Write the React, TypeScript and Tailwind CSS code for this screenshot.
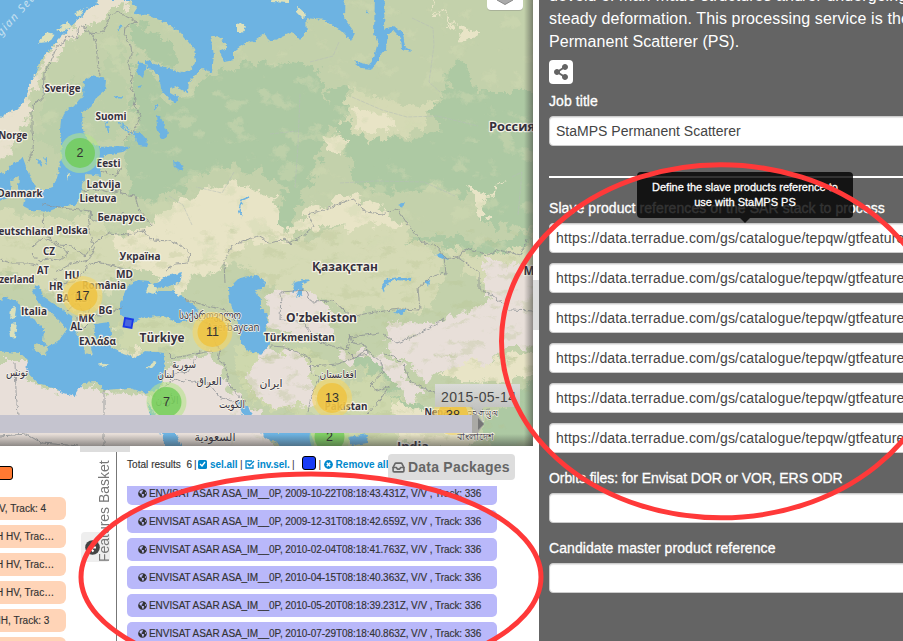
import React from "react";
import { FaGlobeAmericas, FaShareAlt } from "react-icons/fa";
import { FiInbox } from "react-icons/fi";

const WATER = "#6db3e2";
const products = [
  "2009-10-22T08:18:43.431Z",
  "2009-12-31T08:18:42.659Z",
  "2010-02-04T08:18:41.763Z",
  "2010-04-15T08:18:40.363Z",
  "2010-05-20T08:18:39.231Z",
  "2010-07-29T08:18:40.863Z",
];
const basket = ["V, Track: 4", "H HV, Trac…", "H HV, Trac…", "H HV, Trac…", "IH, Track: 3", ""];

type Label = [string, number, number, number, number, boolean?];
// text, centre x, baseline y, width, size, light weight
const labels: Label[] = [
  ["Sverige", 62.5, 92, 36, 10.5],
  ["Suomi", 111, 120, 31, 10.5],
  ["Norge", 13, 139, 29, 10.5],
  ["Eesti", 108.5, 167, 24, 10.5],
  ["Latvija", 103.5, 188, 34, 10.5],
  ["Lietuva", 98, 202, 37, 10.5],
  ["Danmark", 20, 197, 45, 10.5],
  ["Беларусь", 121.5, 221, 48, 10.5],
  ["Россия", 512, 131, 46, 13],
  ["eutschland", 26, 235, 55, 10.5],
  ["Polska", 72, 234, 32, 10.5],
  ["CZ", 49, 255, 12, 10.5],
  ["Україна", 140, 259.5, 41, 10.5],
  ["AT", 43, 274, 12, 10.5],
  ["HU", 72, 279, 15, 10.5],
  ["MD", 124.5, 277.5, 17, 10.5],
  ["zerland", 17, 283, 35, 10.5],
  ["HR", 56, 290, 14, 10.5],
  ["România", 104, 289, 44, 10.5],
  ["BA", 63, 302, 13, 10.5],
  ["RS", 81, 302, 13, 10.5],
  ["Italia", 34, 315, 26, 10.5],
  ["BG", 105.5, 313.5, 14, 10.5],
  ["MK", 86.5, 322, 16, 10.5],
  ["AL", 76.5, 330, 12, 10.5],
  ["Ελλάδα", 97.5, 345, 37, 10.5],
  ["Türkiye", 162, 342, 45, 13],
  ["Қазақстан", 345, 271, 66, 13],
  ["O'zbekiston", 321.5, 322, 71, 13],
  ["Türkmenistan", 299.5, 341, 71, 10.5],
  ["Pakistan", 346, 410, 43, 10.5],
  ["Nepal", 438, 416, 27, 10.5],
  ["India", 413, 451, 32, 13],
  ["М", 529, 275, 11, 13],
  ["საქართველო", 210, 319, 62, 10, true],
  ["Azerbaycan", 233, 331, 53, 10.5, true],
  ["تونس", 17, 376, 22, 11, true],
  ["سورية", 184, 368, 24, 11, true],
  ["لبنان", 166, 378, 17, 11, true],
  ["العراق", 209, 385, 25, 11, true],
  ["الأردن", 167, 404, 23, 11, true],
  ["الكويت", 232, 408, 26, 11, true],
  ["ایران", 271, 387, 23, 11, true],
  ["افغانستان", 338, 378, 37, 11, true],
  ["السعودية", 215, 441, 41, 12, true],
  ["বাংলাদেশ", 475, 440, 37, 10, true],
  ["འབྲུག་ཡུལ", 482, 417, 30, 9, true],
];

const lines = [
  "M82 26 86 31 94 36 96 43 97 56 98 68 100 76",
  "M28 162 32 154 34 142 32 132 32 112 35 102 43 99 44 73 51 61 57 46 64 43 66 36 78 38 77 28 84 25 90 33 98 34 104 31 108 22 109 15 119 12 127 17 132 19 137 22 133 23 126 27 125 36 131 46 132 54 128 62 132 78 131 88 136 99 134 105 141 116 135 128 122 143",
  "M120 160 121 168 116 176 101 171M82 191 98 189 111 193 121 190 122 194 135 196 139 210 152 225M42 204 70 209 91 211 92 221 109 220 124 213",
  "M43 214 44 231 50 239M48 238 60 245 72 246 85 256 93 245 88 228 91 211",
  "M33 246 43 237 57 245 69 253 60 260 49 259 38 261 32 254M0 260 12 263 28 263 44 267M95 246 89 260 71 264 56 272M93 244 109 233 127 235 143 231 153 240 170 241 180 245 190 253 188 263 176 264 166 270",
  "M88 265 97 262 114 266 124 269 133 281M55 278 58 285 77 281 88 266M57 286 66 296 83 291 91 302 88 314 98 316 122 308M67 311 77 302 88 317M76 316 81 331 88 324",
  "M184 299 207 306 226 310 235 321M193 318 208 324 213 339 220 350 218 360 225 365M168 353 173 358 195 354 212 351M168 375 188 372 200 351M184 380 209 383 219 397 239 403",
  "M15 363 16 391 18 415M104 389 104 446M0 436 26 434 42 443 79 446M160 390 175 379 184 382",
  "M225 283 224 263 230 248 243 241 258 236 270 243 286 239 290 244 301 237 314 226 308 214 323 210 352 199 362 207 365 212 383 214 397 208 408 225 422 242 435 246 447 259 460 256 466 248 488 255 498 250 521 255 527 239M280 320 281 292 306 290 311 302 334 301 352 317 368 313 400 309 420 310 418 288 433 276 446 273 444 257M280 320 302 321 319 342 347 350 350 337 380 333",
  "M350 335 353 343 366 345 367 354 354 357 345 348M383 334 397 343 414 336 433 326 445 318M457 257 479 272 479 289 493 296 511 310 533 311",
  "M225 363 229 385 245 402M270 346 285 347 310 358 311 374 320 377 311 397 308 412M310 366 338 364 354 358 366 350 381 362 384 372 370 385 377 391 389 386 380 400 367 414",
  "M384 354 394 356 405 367 410 381 429 391 453 399 478 410 491 409",
];

function Marker({ x, y, n, yellow }: { x: number; y: number; n: string; yellow?: boolean }) {
  return (
    <g>
      <circle cx={x} cy={y} r="20" fill={yellow ? "#f5d566" : "#b5e28c"} fillOpacity=".6" />
      <circle cx={x} cy={y} r="15" fill={yellow ? "#f0c23c" : "#6ecc54"} fillOpacity=".78" />
      <text x={x} y={y + 4} textAnchor="middle" fontSize="12.5" className="fill-[#333] font-['Liberation_Sans',sans-serif]">{n}</text>
    </g>
  );
}

function MapView() {
  return (
    <svg width="533" height="446" viewBox="0 0 533 446" className="block">
      <defs>
        <clipPath id="land">
          <path d="M0 118 8 113 20 107 27 96 30 83 36 75 41 60 51 48 61 37 69 30 77 20 84 15 88 7 94 7 100 0H130L137 8 133 14 148 15 168 24 181 33 194 49 196 61 190 70 181 73 166 67 154 64 145 59 152 69 159 76 161 90 169 99 176 103 179 97 170 92 170 88 175 86 188 94 189 81 202 68 212 73 214 55 210 36 222 38 227 48 219 52 224 62 234 60 234 51 246 43 255 41 265 33 270 42 284 36 293 32 300 40 307 32 306 18 325 20 342 31 351 41 355 33 344 18 345 -8H545V455H-8V118Z" />
        </clipPath>
        <filter id="rough" colorInterpolationFilters="sRGB" x="-10%" y="-10%" width="120%" height="120%">
          <feTurbulence type="fractalNoise" baseFrequency=".075" numOctaves="4" seed="7" />
          <feDisplacementMap in="SourceGraphic" scale="22" xChannelSelector="R" yChannelSelector="G" />
        </filter>
        <filter id="coast" colorInterpolationFilters="sRGB" x="-5%" y="-5%" width="110%" height="110%">
          <feTurbulence type="fractalNoise" baseFrequency=".25" numOctaves="3" seed="3" />
          <feDisplacementMap in="SourceGraphic" scale="4.5" xChannelSelector="R" yChannelSelector="G" />
        </filter>
        <filter id="patches" colorInterpolationFilters="sRGB" x="0" y="0" width="100%" height="100%">
          <feTurbulence type="fractalNoise" baseFrequency=".04 .055" numOctaves="5" seed="12" />
          <feColorMatrix values="0 0 0 0 .82 0 0 0 0 .85 0 0 0 0 .70 8 0 0 0 -4.7" />
        </filter>
        <filter id="relief" colorInterpolationFilters="sRGB" x="0" y="0" width="100%" height="100%">
          <feTurbulence type="fractalNoise" baseFrequency=".05 .1" numOctaves="5" seed="24" />
          <feColorMatrix values="0 0 0 0 .72 0 0 0 0 .77 0 0 0 0 .58 0 7 0 0 -4" />
        </filter>
        <linearGradient id="sideShade"><stop stopColor="#333" stopOpacity="0" /><stop offset="1" stopColor="#333" stopOpacity=".5" /></linearGradient>
        <linearGradient id="baseShade" x2="0" y2="1"><stop stopColor="#333" stopOpacity="0" /><stop offset="1" stopColor="#333" stopOpacity=".5" /></linearGradient>
        <linearGradient id="flag" x2="0" y2="1"><stop stopColor="#dcdcdc" /><stop offset="1" stopColor="#bcbcbc" /></linearGradient>
      </defs>
      <rect width="533" height="446" fill={WATER} />
      <g filter="url(#coast)">
        <g clipPath="url(#land)">
          <rect x="-8" y="-8" width="556" height="466" fill="#c3d1ab" />
          <g filter="url(#rough)">
            <path fill="#e8e1ce" d="M-10 112 20 100 38 70 60 38 88 5 105-5 133-4 122 10 96 20 80 33 65 42 55 54 45 70 35 90 25 125 5 158-10 160Z" />
            <path fill="#adc9a3" d="M128 20 145 24 168 42 186 62 170 68 148 55 134 50ZM132 65 153 70 167 102 188 98 210 75 240 66 280 60 318 67 330 110 322 158 303 195 288 240 275 222 285 185 255 174 222 164 195 175 180 195 145 200 128 184 124 160 135 125ZM330 88 355 90 360 120 375 135 410 138 440 130 430 113 450 92 448 72 466 60 475 92 550 92 550 225 485 226 472 200 440 186 420 190 388 192 355 184 345 145 325 124Z" />
            <path fill="#adc9a3" opacity=".3" d="M44 90 82 80 105 110 90 88 120 30 125 90 135 115 110 142 88 140 60 150 40 140Z" />
            <path fill="#e8e4c6" d="M170 205 200 192 222 184 242 186 260 192 276 194 282 238 298 220 309 206 348 194 385 209 405 228 365 229 320 226 275 247 235 262 195 275 180 295 150 274 130 272 110 260 112 235 145 230 157 216Z" />
            <path fill="#e8e4c6" d="M352 110 372 112 400 116 397 132 370 134 357 126ZM322 137 346 139 344 156 328 150ZM470 185 484 197 505 182 487 202 485 222 472 206ZM430 1 455 26 482 30 462 42 451 24 437 11Z" />
            <path fill="#d5dab5" d="M-10 208 40 218 90 218 115 235 125 260 110 285 100 310 75 310 45 290 10 275-10 270ZM225 260 240 245 270 240 305 243 330 230 380 224 405 227 425 247 445 262 440 283 425 310 370 309 354 319 335 304 308 295 278 292 260 276ZM440 248 550 246V325L495 301 479 280ZM350 88 400 105 440 100 420 130 370 140 345 125Z" />
            <path fill="#e8e4c6" d="M352 112 372 112 396 117 392 130 370 134 357 126Z" />
            <path fill="#ced8ad" d="M120 322 155 316 200 316 211 341 192 352 160 349 123 350ZM230 342 260 350 310 351 340 371 338 395 370 370 384 392 405 396 405 460H350L330 415 290 413 255 403 238 382Z" />
            <path fill="#e8dfd9" d="M-15 362 28 362 30 383 64 392 78 384 105 390 150 392 160 387 170 362 205 352 218 364 229 390 260 412 280 465H-15ZM269 291 306 289 330 312 334 334 300 337 270 324ZM244 377 268 346 310 362 315 400 293 410 260 400ZM389 321 432 327 470 310 495 299 550 311V344L505 349 488 363 446 367 425 383 406 362 388 349ZM483 263 550 267V311L504 309 484 294ZM340 350 363 349 369 353 397 359 407 379 425 389 416 405 380 371 356 363 339 360Z" />
            <path fill="#e8e4c6" d="M448 366 490 361 550 348V374L500 383 460 382 440 374ZM90 355 140 350 154 354 130 360 110 357ZM395 400 415 402 450 420 480 436 470 446H400Z" />
            <path fill="#adc9a3" d="M386 392 412 402 439 413 482 418 504 410 524 386 550 383 550 465H500L480 422 440 421 412 409ZM405 240 443 231 470 244 510 240 535 225 525 249 480 257 451 249 435 244ZM353 355 369 359 403 392 394 388 371 374 354 366Z" />
          </g>
          <rect width="540" height="260" filter="url(#patches)" opacity=".45" />
          <rect y="230" width="540" height="130" filter="url(#relief)" opacity=".3" />
          <rect x="230" y="355" width="310" height="95" filter="url(#relief)" opacity=".35" />
        </g>
        <g fill={WATER}>
          <path d="M-5 174 5 173 14 163 23 158 28 172 36 190 50 190 57 178 61 160 62 144 60 132 61 119 68 109 76 104 83 95 84 81 91 76 106 79 105 91 96 98 91 107 82 112 83 129 89 143 99 147 118 146 131 147 123 152 104 155 100 162 101 176 87 174 82 184 81 195 76 205 62 206 47 212 39 211 31 210 23 206 25 196 17 199 19 177 10 181 12 197-5 202Z" />
          <path d="M132 131 140 132 148 141 147 147 138 146ZM156 115 161 118 168 132 166 139 160 137 157 126ZM174 161 184 165 181 171 175 167ZM145 59 151 62 153 69 147 68ZM139 62 146 65 143 78 137 73Z" />
          <path d="M375-5H385L384 29 394 26 403 33 405 47 412 51 401 49 400 37 394 31 388 34 386 49 379 58 372 70 362 69 353 61 369 65 374 57 378 42 374 34ZM365 11 368 12 365 14Z" />
          <path d="M-5 303 6 297 18 302 23 313 36 321 44 329 43 342 48 346 33 344 34 350 46 356 47 347 58 342 67 329 60 321 50 312 39 303 32 289 39 285 43 296 57 306 72 316 75 330 83 342 85 353 93 356 90 343 99 344 94 334 95 324 109 322 111 333 111 348 124 354 136 358 145 351 165 353 164 370 159 389 145 393 129 388 105 390 96 382 83 383 75 396 64 393 53 388 38 384 26 371 28 360 20 353-5 351Z" />
          <path d="M120 315 120 304 128 286 139 280 150 281 155 291 172 291 196 306 198 317 178 323 162 316 144 317 135 322ZM154 284 167 276 183 272 180 282 164 288 152 287Z" />
          <path d="M229 288 239 278 255 275 266 281 262 289 255 290 261 300 261 308 268 314 267 326 265 334 270 344 261 354 248 351 241 343 241 330 235 315 230 302ZM292 283 307 279 309 281 302 283 303 294 296 298 299 289 292 293 295 284ZM381 286 387 279 398 277 410 278 411 281 395 280 385 285 384 293ZM394 313 402 309 407 310 402 314ZM435 255 441 253 449 260 442 258ZM425 280 430 281 428 287ZM398 205 405 202 403 207Z" />
          <path d="M238 399 248 406 255 424 275 432 310 432 317 450H290L270 440 250 426 242 414ZM162 432 175 432 183 450H165ZM147 401 157 417 161 435 151 418ZM349 437 368 434 367 443 351 446Z" />
        </g>
        <g fill="#dce1bc">
          <path d="M237 25 241 22 246 28 242 33 237 33ZM270-2H288L288 3 272 2ZM296 6 305 14 304 19 297 12ZM80 317 90 321 85 328 78 322ZM66 174 70 173 68 181ZM11 309 16 307 15 317 10 319ZM10 324 17 323 15 337 11 338ZM98 363 110 365 102 367ZM146 368 154 362 157 363 151 369ZM149 283 157 288 155 294 146 292Z" />
          <path d="M119 353 126 350 127 354ZM112 339 116 341 112 343ZM112 327 117 329 112 331ZM92 334 104 343 96 337ZM38 43 47 32 55 34 50 42ZM57 30 68 22 72 27 62 32ZM74 14 84 8 80 16Z" />
        </g>
        <path d="M105 117 109 133M126 112 122 127 132 134M118 122 130 129M114 97 122 98M37 158 42 167M46 164 45 157M118 30 122 25M138 87 142 86M158 105 154 110M249 197 242 200 239 210 242 217" stroke={WATER} strokeWidth="1.4" fill="none" />
      </g>
      <g fill="none" stroke="#8d9296" strokeWidth=".8" filter="url(#coast)">
        {lines.map((d) => <path key={d} d={d} />)}
      </g>
      <path fill="none" stroke="#b5bdb8" strokeWidth=".55" strokeDasharray="4 1" d="M310 62 333 56 339 42M412 18 433 28 434 45 429 82 440 92M300 94 298 145 295 188M270 134 297 131M352 97 382 110 407 117 437 116 478 126M340 183 376 181 424 182 455 196M234 172 222 193 196 187M169 196 183 205 192 225M512 177 522 172 518 215" />
      <text x="-5" y="38" transform="rotate(-48 0 38)" className="fill-[#c8e1f0] italic font-['Noto_Sans',sans-serif]" fontSize="11" letterSpacing="1.4">egian Sea</text>
      <g className="font-['Open_Sans','DejaVu_Sans',sans-serif] fill-[#35303d] stroke-[#f5f3e8] [paint-order:stroke]">
        {labels.map(([text, x, y, w, size, light]) => (
          <text key={text} x={x} y={y} fontSize={size} fontWeight={light ? 400 : 700} strokeWidth={light ? 1.5 : 2.4} strokeLinejoin="round" textAnchor="middle" textLength={w} lengthAdjust="spacingAndGlyphs">{text}</text>
        ))}
      </g>
      <path d="M125 318 133 319.5 131.500 328 123.500 326.500Z" fill="#4966de" stroke="#1938e8" strokeWidth="1.8" />
      <Marker x={80} y={153} n="2" />
      <Marker x={82.5} y={296} n="17" yellow />
      <Marker x={212.5} y={332} n="11" yellow />
      <Marker x={166.5} y={402} n="7" />
      <Marker x={332} y={398} n="13" yellow />
      <Marker x={453} y={415} n="38" yellow />
      <Marker x={329.5} y={437} n="2" />
      <rect y="415" width="472" height="18" fill="#c5c4cf" />
      <path d="M472 415H478L484 424 478 433H472Z" fill="#aaa9a5" /><path d="M478 418 484 424 478 430Z" fill="#777" />
      <path d="M435 384H520V407H484L478 414 472 407H435Z" fill="url(#flag)" fillOpacity=".92" />
      <text x="441" y="402" fontSize="14" textLength="75" className="fill-[#444] font-['Liberation_Sans',sans-serif]">2015-05-14</text>
      <rect x="487" y="-6" width="36" height="17" rx="4" fill="#777" fillOpacity=".35" />
      <rect x="487" y="-6" width="36" height="16" rx="4" fill="#fff" />
      <path d="M497 0 505 4.500 513 0" fill="#aaa" stroke="#888" />
      <rect x="524" width="9" height="446" fill="url(#sideShade)" />
      <rect y="434" width="533" height="12" fill="url(#baseShade)" />
    </svg>
  );
}

function Field({ value = "", url }: { value?: string; url?: boolean }) {
  return <div className={`flex h-[30px] w-[400px] items-center whitespace-nowrap rounded border border-[#ccc] bg-white pl-1.5 text-[14px] text-[#444] shadow-[inset_0_1px_1px_rgba(0,0,0,.1)] ${url ? "tracking-[0.17px]" : "tracking-[0.01px]"}`}>{value}</div>;
}

function FieldLabel({ children, tight }: { children: React.ReactNode; tight?: boolean }) {
  return <div className={`h-5 whitespace-nowrap text-[14px] leading-5 [-webkit-text-stroke:.3px_white] ${tight ? "tracking-[-0.08px]" : "tracking-[0.07px]"}`}>{children}</div>;
}

export default function App() {
  return (
    <main className="relative flex h-[641px] w-[903px] overflow-hidden bg-white font-['Liberation_Sans',Arial,sans-serif]">
      <div className="flex w-[533px] shrink-0 flex-col">
        <MapView />
        <div className="ml-20 h-1.5 w-[50px] bg-[#ddd]" />
        <div className="flex h-[189px]">
          <div className="w-[66px] overflow-hidden pt-[14px]">
            <div className="-ml-1 h-3.5 w-[17px] rounded-[3px] border border-black bg-[#ff7932]" />
            <div className="mt-[17px] flex flex-col gap-[5px]">
              {basket.map((text, i) => (
                <div key={i} className="h-[23px] shrink-0 overflow-hidden whitespace-nowrap rounded-r-[6px] bg-[#ffd4b7] text-[10px] leading-[23px] tracking-[.02px] text-[#333] [-webkit-text-stroke:.15px_#333]"><span className={i === 0 ? "-ml-px" : i === 4 ? "-ml-0.5" : "-ml-1"}>{text}</span></div>
              ))}
            </div>
          </div>
          <div className="relative w-[51px] border-r border-[#777]">
            <div className="absolute left-[15px] top-[80px] flex h-[30px] w-[29px] items-center rounded bg-[#eee] pl-1">
              <svg width="15" height="15" viewBox="0 0 15 15"><circle cx="7.5" cy="7.5" r="7.3" fill="#444" /><path d="M8.5 3.5 4.5 7.5 8.5 11.5M5 7.5H11" stroke="white" strokeWidth="2" fill="none" /></svg>
            </div>
            <div className="absolute left-[30px] top-2 h-[102px] whitespace-nowrap text-[14px] leading-[17px] tracking-[-0.02px] text-[#777] [writing-mode:vertical-rl] rotate-180">Features Basket</div>
          </div>
          <div className="w-[416px] pl-[10px]">
            <div className="relative flex h-[34px] items-start whitespace-nowrap pt-[5px] text-[10px] leading-[15px] text-[#0088cc]">
              <span className="w-[67px] text-[#333] tracking-[.04px] [-webkit-text-stroke:.15px_#333]">Total results&nbsp; 6</span><span className="w-[4px] text-[#333]">|</span>
              <svg width="9" height="9" viewBox="0 0 9 9" className="mt-[3px]"><rect width="9" height="9" rx="1.5" fill="currentColor" /><path d="m2 4 2 2 3-4" stroke="white" strokeWidth="1.4" fill="none" /></svg>
              <b className="ml-[3px] w-[30px] tracking-[-.05px]">sel.all</b><span className="w-[5px] text-[#333]">|</span>
              <svg width="10" height="9" viewBox="0 0 10 9" className="mt-[3px]"><path d="M7 1H1V8H8V5M2.5 3.5 4.5 5.5 9 1" stroke="currentColor" strokeWidth="1.3" fill="none" /></svg>
              <b className="ml-[2px] w-[35px] tracking-[-.05px]">inv.sel.</b><span className="text-[#333]">|</span>
              <span className="ml-[7px] mt-[-1px] h-[14px] w-3.5 rounded-[3px] border border-black bg-[#193cf5]" />
              <span className="ml-[3px] w-[5px] text-[#333]">|</span>
              <svg width="9" height="9" viewBox="0 0 9 9" className="mt-[3px]"><circle cx="4.5" cy="4.5" r="4.4" fill="currentColor" /><path d="m2.8 2.8 3.4 3.4m0-3.4L2.8 6.2" stroke="white" strokeWidth="1.5" /></svg>
              <b className="ml-[3px] text-[10px]">Remove all</b>
              <div className="absolute left-[261px] top-[2px] flex h-[26px] w-[127px] items-center gap-[3px] rounded bg-[#ddd] pl-[4px] text-[14px] font-bold tracking-[.22px] text-[#666]"><FiInbox className="size-[13px]" strokeWidth={3} />Data Packages</div>
            </div>
            <div className="flex h-[155px] flex-col gap-[5px] overflow-hidden">
              {products.map((date, i) => (
                <div key={date} className={`flex w-[370px] shrink-0 items-center whitespace-nowrap bg-[#b9b8fa] pl-[11px] text-[#333] ${i === 0 ? "h-[19px] rounded-b-[5px] pb-[4px]" : "h-[23px] rounded-[5px]"}`}>
                  <FaGlobeAmericas className="mr-[2px] size-[9px]" /><span className="text-[10px] tracking-[-.06px] [-webkit-text-stroke:.15px_#333]">ENVISAT ASAR ASA_IM__0P, {date}, V/V , Track: 336</span>
                </div>
              ))}
            </div>
          </div>
        </div>
      </div>
      <div className="w-1.5 shrink-0 pt-[280px]"><div className="h-[50px] bg-[#ddd]" /></div>
      <div className="h-full w-[364px] overflow-hidden bg-[#646464] pl-[10px] text-white">
        <div className="-mt-[16px] whitespace-nowrap text-[16px] leading-[23px] tracking-[.07px]">
          <div>devoid of man-made structures and/or undergoing</div>
          <div className="tracking-[.13px]">steady deformation. This processing service is the</div>
          <div>Permanent Scatterer (PS).</div>
        </div>
        <div className="mb-[7px] mt-[7px] flex size-6 items-center justify-center rounded bg-white"><FaShareAlt className="size-4 text-[#646464]" /></div>
        <FieldLabel>Job title</FieldLabel>
        <div className="mt-[5px]"><Field value="StaMPS Permanent Scatterer" /></div>
        <div className="mt-[30px] h-0.5 w-[400px] bg-white" />
        <div className="relative mb-[5px] mt-5">
          <FieldLabel>Slave product references of the SAR stack to process</FieldLabel>
          <div className="absolute -top-[26px] left-[88px] h-[46px] w-[216px] rounded bg-black/80 pt-[8px] text-center text-[11px] leading-[15px] [-webkit-text-stroke:.3px_white]">Define the slave products reference to<br />use with StaMPS PS<div className="absolute left-[103px] top-[46px] border-x-5 border-t-5 border-x-transparent border-t-black/80" /></div>
        </div>
        <div className="flex flex-col gap-[10px]">
          {[0, 1, 2, 3, 4, 5].map((i) => <Field key={i} url value="https://data.terradue.com/gs/catalogue/tepqw/gtfeature/search" />)}
        </div>
        <div className="mb-[5px] mt-[15px]"><FieldLabel tight>Orbits files: for Envisat DOR or VOR, ERS ODR</FieldLabel></div>
        <Field />
        <div className="mb-[5px] mt-[15px]"><FieldLabel>Candidate master product reference</FieldLabel></div>
        <Field />
      </div>
      <svg className="pointer-events-none absolute inset-0" width="903" height="641" fill="none" stroke="#ff3939" strokeWidth="5">
        <ellipse cx="721" cy="341.3" rx="219.500" ry="176.5" />
        <ellipse cx="311" cy="577" rx="230" ry="103" />
      </svg>
    </main>
  );
}
